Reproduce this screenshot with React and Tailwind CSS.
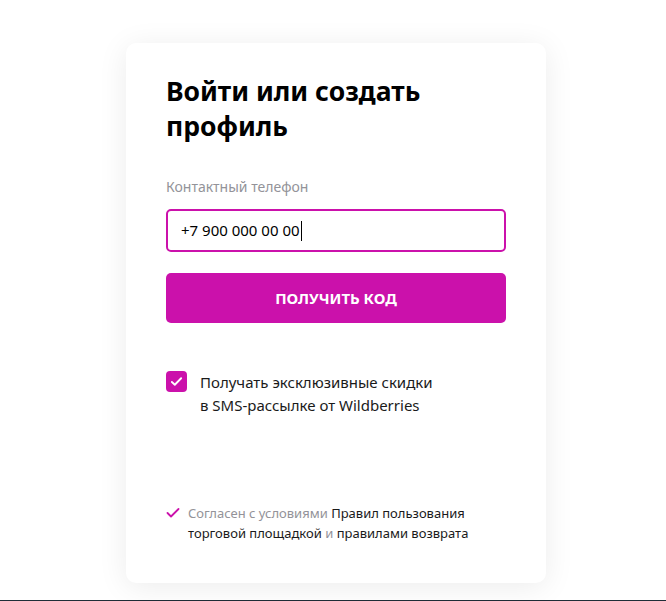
export default function App() {
  return (
    <div
      className="min-h-[601px] bg-white flex flex-col items-center pl-[6px] border-b border-[#1f2d37]"
      style={{ fontFamily: '"Noto Sans", "Open Sans", sans-serif' }}
    >
      <div className="mt-[43px] w-[420px] h-[540px] bg-white rounded-[10px] shadow-[0_4px_30px_rgba(0,0,0,0.08)] px-10 pt-[31px] pb-[40px] flex flex-col">
        <h1 className="text-[26.5px] font-bold leading-[35px] text-black">
          Войти или создать профиль
        </h1>

        <label className="mt-[33px] text-[14px] text-[#939399] leading-5">Контактный телефон</label>
        <div className="mt-[12px] h-[43px] border-2 border-[#cb11ab] rounded-[5px] flex items-center px-[13px] text-[15px] text-black">
          +7 900 000 00 00<span className="w-px h-[20px] bg-black ml-px" />
        </div>

        <button className="mt-[21px] h-[50px] bg-[#cb11ab] rounded-[5px] text-white text-[15px] font-bold uppercase">
          Получить код
        </button>

        <div className="mt-[48px] flex items-start gap-[13px]">
          <span className="w-[21px] h-[21px] rounded-[4px] bg-[#cb11ab] flex items-center justify-center shrink-0">
            <svg width="13" height="13" viewBox="0 0 14 14" fill="none">
              <path d="M2 7.5l3.2 3L12 3.5" stroke="white" strokeWidth="2" strokeLinecap="round" strokeLinejoin="round" />
            </svg>
          </span>
          <p className="text-[15px] leading-[23px] text-[#1a1a1a]">
            Получать эксклюзивные скидки<br />в SMS-рассылке от Wildberries
          </p>
        </div>

        <div className="mt-auto flex items-start gap-[8px]">
          <svg width="14" height="14" viewBox="0 0 14 14" fill="none" className="mt-[3px] shrink-0">
            <path d="M1.5 7l3.5 3.5L12.5 3" stroke="#cb11ab" strokeWidth="1.8" strokeLinecap="round" strokeLinejoin="round" />
          </svg>
          <p className="text-[13px] leading-[20px] text-[#939399]">
            Согласен с условиями <span className="text-[#1a1a1a]">Правил пользования торговой площадкой</span> и <span className="text-[#1a1a1a]">правилами возврата</span>
          </p>
        </div>
      </div>
    </div>
  );
}
